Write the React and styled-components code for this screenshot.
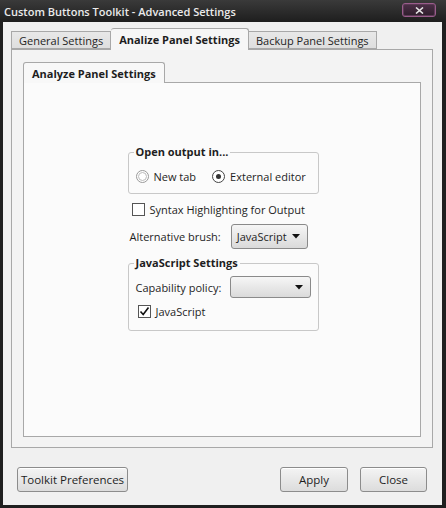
import React from "react";
import styled, { createGlobalStyle } from "styled-components";

const Global = createGlobalStyle`
  html, body { margin: 0; padding: 0; background: #1c1c1c; }
  body { font-family: "Open Sans", "Liberation Sans", sans-serif; font-size: 11px; color: #1e1e1e; }
  * { box-sizing: border-box; }
`;

const Window = styled.div`
  width: 446px;
  height: 508px;
  background: #1f1f1f;
  display: flex;
  flex-direction: column;
`;

const TitleBar = styled.div`
  height: 22px;
  flex: none;
  display: flex;
  align-items: center;
  justify-content: space-between;
  padding: 0 10px 0 4px;
  background: linear-gradient(#3a3a3a, #1e1e1e);
  color: #eaeaea;
  font-size: 11px;
  font-weight: 600;
`;

const CloseBtn = styled.div`
  width: 34px;
  height: 14px;
  border: 1px solid #9a5c8c;
  border-radius: 3px;
  background: linear-gradient(#4c2f47, #2e1d2b);
  box-shadow: inset 0 0 0 1px #5b3a55;
  display: flex;
  align-items: center;
  justify-content: center;
  margin-top: -2px;
`;

const Body = styled.div`
  flex: 1;
  margin: 0 4px 3px 3px;
  background: #f0f0f0;
  padding: 6px 0 0 8px;
  display: flex;
  flex-direction: column;
`;

const TabRow = styled.div`
  display: flex;
  align-items: flex-end;
  height: 21px;
  position: relative;
  z-index: 1;
`;

const Tab = styled.div`
  height: ${(p) => (p.$active ? "22px" : "18px")};
  padding: 0 ${(p) => (p.$active ? "8px" : "7px")};
  margin-bottom: ${(p) => (p.$active ? "-1px" : "0")};
  border: 1px solid #a8a8a8;
  border-bottom: ${(p) => (p.$active ? "none" : "1px solid #a8a8a8")};
  border-left: ${(p) => (p.$noLeft ? "none" : "1px solid #a8a8a8")};
  border-radius: ${(p) => (p.$active ? "3px 3px 0 0" : "0")};
  background: ${(p) => (p.$active ? "#f6f6f6" : "linear-gradient(#e8e8e8, #dedede)")};
  font-weight: ${(p) => (p.$active ? 700 : 400)};
  display: flex;
  align-items: center;
  white-space: nowrap;
`;

const Panel = styled.div`
  width: 422px;
  height: 399px;
  border: 1px solid #a8a8a8;
  background: #f3f3f3;
  padding: 12px 11px 10px 11px;
  display: flex;
  flex-direction: column;
`;

const InnerTabRow = styled.div`
  display: flex;
  position: relative;
  z-index: 1;
`;

const InnerTab = styled.div`
  height: 21px;
  margin-bottom: -1px;
  padding: 0 8px;
  border: 1px solid #a8a8a8;
  border-bottom: none;
  border-radius: 3px 3px 0 0;
  background: #f8f8f8;
  font-weight: 700;
  display: flex;
  align-items: center;
`;

const InnerPane = styled.div`
  flex: 1;
  border: 1px solid #a8a8a8;
  background: #fbfbfb;
  display: flex;
  justify-content: center;
  padding-top: 62px;
`;

const Column = styled.div`
  width: 191px;
  margin-left: 2px;
  display: flex;
  flex-direction: column;
`;

const Group = styled.fieldset`
  margin: 0;
  border: 1px solid #c8c8c8;
  border-radius: 3px;
  padding: ${(p) => p.$pad};
  margin-top: ${(p) => p.$mt || "0"};
  min-width: 0;
`;

const Legend = styled.legend`
  padding: 0 2px;
  margin-left: -2px;
  font-weight: 700;
  line-height: 14px;
`;

const Row = styled.div`
  display: flex;
  align-items: center;
  gap: ${(p) => p.$gap || "6px"};
  padding-left: ${(p) => p.$indent || "0"};
  margin-top: ${(p) => p.$mt || "0"};
  white-space: nowrap;
`;

const Option = styled.label`
  display: flex;
  align-items: center;
  gap: 5px;
`;

const RadioDot = styled.span`
  width: 13px;
  height: 13px;
  border-radius: 50%;
  border: 1px solid ${(p) => (p.$on ? "#444" : "#999")};
  background: #fff;
  display: flex;
  align-items: center;
  justify-content: center;
  &::after {
    content: "";
    width: ${(p) => (p.$on ? "5px" : "7px")};
    height: ${(p) => (p.$on ? "5px" : "7px")};
    border-radius: 50%;
    background: ${(p) => (p.$on ? "#333" : "transparent")};
    border: ${(p) => (p.$on ? "none" : "1px solid #bbb")};
  }
`;

const Box = styled.span`
  width: 13px;
  height: 13px;
  border: 1px solid #555;
  background: #fff;
  display: flex;
  align-items: center;
  justify-content: center;
`;

const Select = styled.div`
  width: ${(p) => p.$w};
  height: ${(p) => p.$h};
  border: 1px solid #8a8a8a;
  border-radius: 3px;
  background: linear-gradient(#f6f6f6, #dadada);
  display: flex;
  align-items: center;
  justify-content: space-between;
  padding: 0 7px 0 5px;
`;

const Arrow = () => (
  <svg width="8" height="5" viewBox="0 0 8 5">
    <path d="M0 0H8L4 4.5Z" fill="#111" />
  </svg>
);

const Footer = styled.div`
  display: flex;
  align-items: center;
  margin-top: 19px;
  padding-left: 6px;
  padding-right: 15px;
`;

const Button = styled.div`
  width: ${(p) => p.$w};
  height: 25px;
  border: 1px solid #8c8c8c;
  border-radius: 3px;
  background: linear-gradient(#f4f4f4, #dcdcdc);
  box-shadow: inset 0 1px 0 #fff;
  display: flex;
  align-items: center;
  justify-content: center;
  font-size: 11.5px;
  margin-left: ${(p) => p.$ml || "0"};
`;

const Spacer = styled.div`
  flex: 1;
`;

export default function App() {
  return (
    <>
      <Global />
      <Window>
        <TitleBar>
          <span>Custom Buttons Toolkit - Advanced Settings</span>
          <CloseBtn>
            <svg width="9" height="7" viewBox="0 0 9 7">
              <path d="M1 0.5L8 6.5M8 0.5L1 6.5" stroke="#e6e6e6" strokeWidth="1.6" />
            </svg>
          </CloseBtn>
        </TitleBar>
        <Body>
          <TabRow>
            <Tab>General Settings</Tab>
            <Tab $active $noLeft>Analize Panel Settings</Tab>
            <Tab $noLeft>Backup Panel Settings</Tab>
          </TabRow>
          <Panel>
            <InnerTabRow>
              <InnerTab>Analyze Panel Settings</InnerTab>
            </InnerTabRow>
            <InnerPane>
              <Column>
                <Group $pad="10px 8px 9px 7px">
                  <Legend>Open output in...</Legend>
                  <Row $gap="16px">
                    <Option>
                      <RadioDot />
                      New tab
                    </Option>
                    <Option>
                      <RadioDot $on />
                      External editor
                    </Option>
                  </Row>
                </Group>
                <Row $indent="4px" $mt="8px">
                  <Option>
                    <Box />
                    Syntax Highlighting for Output
                  </Option>
                </Row>
                <Row $indent="2px" $mt="7px" $gap="10px">
                  <span>Alternative brush:</span>
                  <Select $w="77px" $h="25px">
                    JavaScript
                    <Arrow />
                  </Select>
                </Row>
                <Group $pad="6px 6px 11px 7px" $mt="7px">
                  <Legend>JavaScript Settings</Legend>
                  <Row $gap="9px">
                    <span>Capability policy:</span>
                    <Select $w="81px" $h="22px">
                      <span />
                      <Arrow />
                    </Select>
                  </Row>
                  <Row $indent="2px" $mt="6px">
                    <Option>
                      <Box>
                        <svg width="11" height="11" viewBox="0 0 11 11">
                          <path d="M1.5 5.5L4.2 8.5L9.5 1.5" stroke="#111" strokeWidth="1.6" fill="none" />
                        </svg>
                      </Box>
                      JavaScript
                    </Option>
                  </Row>
                </Group>
              </Column>
            </InnerPane>
          </Panel>
          <Footer>
            <Button $w="111px">Toolkit Preferences</Button>
            <Spacer />
            <Button $w="68px">Apply</Button>
            <Button $w="67px" $ml="12px">Close</Button>
          </Footer>
        </Body>
      </Window>
    </>
  );
}
